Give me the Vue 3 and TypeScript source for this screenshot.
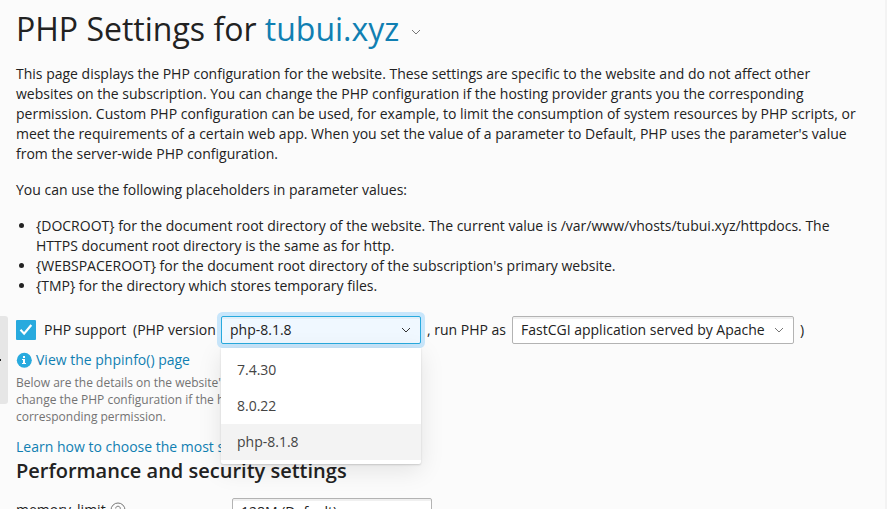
<script setup lang="ts">
import { ref } from 'vue'

const placeholders: string[] = [
  '{DOCROOT} for the document root directory of the website. The current value is /var/www/vhosts/tubui.xyz/httpdocs. The HTTPS document root directory is the same as for http.',
  "{WEBSPACEROOT} for the document root directory of the subscription's primary website.",
  '{TMP} for the directory which stores temporary files.',
]
const versions: string[] = ['7.4.30', '8.0.22', 'php-8.1.8']
const selected = ref('php-8.1.8')
const open = ref(true)
const enabled = ref(true)

function choose(version: string): void {
  selected.value = version
  open.value = false
}
</script>

<template>
  <div class="page">
    <button class="handle" aria-label="Toggle sidebar"><i></i></button>
    <main class="content">
      <h1 class="title">
        <span>PHP Settings for <a>tubui.xyz</a></span>
        <svg class="title-chevron" width="10" height="6" viewBox="0 0 10 6"><path d="M1 1l4 4 4-4" /></svg>
      </h1>

      <p class="intro">
        This page displays the PHP configuration for the website. These settings are specific to the website and do not
        affect other websites on the subscription. You can change the PHP configuration if the hosting provider grants
        you the corresponding permission. Custom PHP configuration can be used, for example, to limit the consumption of
        system resources by PHP scripts, or meet the requirements of a certain web app. When you set the value of a
        parameter to Default, PHP uses the parameter's value from the server-wide PHP configuration.
      </p>
      <p class="intro">You can use the following placeholders in parameter values:</p>
      <ul class="list">
        <li v-for="item in placeholders" :key="item">{{ item }}</li>
      </ul>

      <div class="support">
        <button class="checkbox" role="checkbox" :aria-checked="enabled" @click="enabled = !enabled">
          <svg v-if="enabled" width="20" height="20" viewBox="0 0 20 20"><path d="M4.5 9.8l3.6 3.9 7.2-8.7" /></svg>
        </button>
        <span class="support-label">PHP support</span>
        <span class="version-label">(PHP version</span>
        <div class="dropdown">
          <button class="select focused" @click="open = !open">
            <span>{{ selected }}</span>
            <svg width="10" height="6" viewBox="0 0 10 6"><path d="M1 1l4 4 4-4" /></svg>
          </button>
          <div v-if="open" class="menu">
            <div
              v-for="version in versions"
              :key="version"
              class="option"
              :class="{ active: version === selected }"
              @click="choose(version)"
            >{{ version }}</div>
          </div>
        </div>
        <span class="run-label">, run PHP as</span>
        <button class="select handler">
          <span>FastCGI application served by Apache</span>
          <svg width="10" height="6" viewBox="0 0 10 6"><path d="M1 1l4 4 4-4" /></svg>
        </button>
        <span class="paren">)</span>
      </div>

      <a class="info-link">
        <svg width="16" height="16" viewBox="0 0 16 16">
          <circle cx="8.3" cy="8.3" r="7.5" fill="#28aade" />
          <path d="M7 4h2v2H7zM6 7h3v4h1v1H6v-1h1V8H6z" fill="#fff" />
        </svg>
        <span>View the phpinfo() page</span>
      </a>
      <p class="hint">
        Below are the details on the website's<br />
        change the PHP configuration if the ho<br />
        corresponding permission.
      </p>
      <a class="learn">Learn how to choose the most su</a>
      <h2 class="section">Performance and security settings</h2>
      <div class="field">
        <label class="field-label">
          <span>memory_limit</span>
          <svg width="16" height="16" viewBox="0 0 16 16">
            <circle cx="8" cy="8" r="7" />
            <path d="M5.7 6.5c0-3 4.6-3 4.6 0 0 1.7-2.3 1.7-2.3 3.5M8 11v1.3" />
          </svg>
        </label>
        <button class="select memory">
          <span>128M (Default)</span>
        </button>
      </div>
    </main>
  </div>
</template>

<style>
body {
  margin: 0;
  overflow: hidden;
}
</style>

<style scoped>
.page {
  position: relative;
  box-sizing: border-box;
  width: 887px;
  height: 509px;
  overflow: hidden;
  background: #fbfbfb;
  border-right: 2px solid #f3f3f3;
  color: #222;
  font: 14px/20px 'Open Sans', sans-serif;
}
button {
  font: inherit;
  color: inherit;
  padding: 0;
  border: 0;
}
a {
  color: #107fb2;
}
.handle {
  position: absolute;
  left: 0;
  top: 316px;
  width: 8px;
  height: 88px;
  display: flex;
  align-items: center;
  background: #e6e6e6;
  border-radius: 0 3px 3px 0;
}
.handle i {
  width: 1px;
  height: 2px;
  background: #222;
}
.content {
  padding: 9px 16px 0;
}
.title {
  display: flex;
  align-items: center;
  height: 40px;
  margin: 0 0 15px;
  font-size: 32px;
  line-height: 40px;
  font-weight: 400;
  white-space: nowrap;
}
.title-chevron {
  margin: 6px 0 0 12px;
}
svg {
  flex: none;
  display: block;
  fill: none;
  stroke: none;
}
.title-chevron path,
.select path {
  stroke: #777;
  stroke-width: 1;
}
.intro {
  margin: 0 0 16px;
  width: 846px;
}
.list {
  margin: 0 0 20px;
  padding-left: 20px;
}
.support {
  display: flex;
  align-items: center;
  height: 28px;
  white-space: nowrap;
}
.checkbox {
  width: 20px;
  height: 20px;
  border-radius: 1px;
  background: #28aade;
}
.checkbox path {
  stroke: #fff;
  stroke-width: 2.2;
}
.support-label {
  width: 83px;
  margin-left: 8px;
}
.version-label {
  width: 83px;
  margin: 0 5px 0 6px;
}
.dropdown {
  position: relative;
  width: 200px;
}
.select {
  display: flex;
  align-items: center;
  justify-content: space-between;
  box-sizing: border-box;
  width: 200px;
  height: 28px;
  padding: 0 9px 0 8px;
  border: 1px solid #b3b3b3;
  border-radius: 2px;
  background: #fff;
  box-shadow: inset 0 2px 0 #f0f0f0;
  white-space: nowrap;
}
.select.focused {
  border-color: #28aade;
  background: #f0f8ff;
  box-shadow: 0 0 0 4px #c8e6fb, inset 0 2px 0 #e2eff8;
}
.select.focused path {
  stroke: #333;
}
.menu {
  position: absolute;
  z-index: 2;
  left: 0;
  top: 32px;
  width: 200px;
  box-sizing: border-box;
  padding: 4px 0;
  background: #fff;
  border-radius: 0 0 2px 2px;
  box-shadow: 0 1px 2px rgba(0, 0, 0, 0.16), 0 6px 24px rgba(0, 0, 0, 0.1);
}
.option {
  height: 36px;
  padding: 0 16px;
  line-height: 36px;
  color: #444;
}
.option.active {
  background: #f3f3f3;
}
.run-label {
  width: 80px;
  margin-left: 6px;
}
.handler {
  width: 282px;
  margin-left: 5px;
}
.paren {
  margin-left: 6px;
}
.info-link {
  display: flex;
  align-items: center;
  gap: 4px;
  margin-top: 6px;
}
.hint {
  margin: 4px 0 12px;
  font-size: 12px;
  line-height: 17px;
  color: #737373;
}
.learn {
  display: block;
}
.section {
  margin: 0;
  font-size: 20px;
  line-height: 28px;
  font-weight: 600;
}
.field {
  display: flex;
  margin-top: 13px;
}
.field-label {
  display: flex;
  align-items: center;
  gap: 4px;
  width: 216px;
  height: 24px;
}
.field-label svg {
  stroke: #777;
}
</style>
